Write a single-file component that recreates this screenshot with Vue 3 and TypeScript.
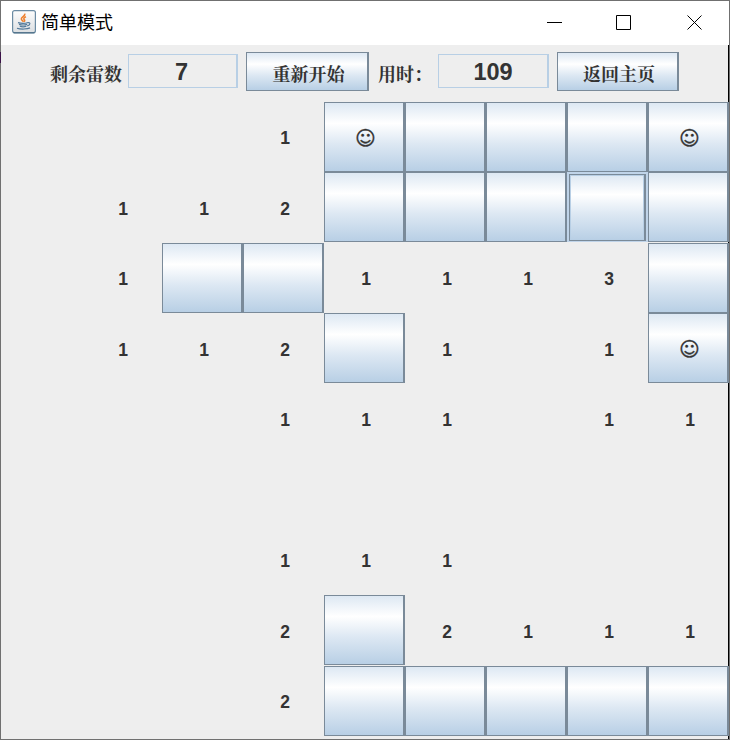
<script setup lang="ts">
type Cell = { kind: 'open' | 'covered' | 'flag' | 'focus'; text: string }

// '.' empty, digit = neighbour count, '#' covered, 'F' marked, 'O' covered with focus
const layout: string[] = [
  '...1F###F',
  '.112###O#',
  '.1##1113#',
  '.112#1.1F',
  '...111.11',
  '.........',
  '...111...',
  '...2#2111',
  '...2#####',
]

function toCell(c: string): Cell {
  if (c === '#') return { kind: 'covered', text: '' }
  if (c === 'O') return { kind: 'focus', text: '' }
  if (c === 'F') return { kind: 'flag', text: '☺' }
  return { kind: 'open', text: c === '.' ? '' : c }
}

const cells: Cell[] = layout.flatMap((row) => row.split('').map(toCell))
const minesLeft = 7
const elapsed = 109
</script>

<template>
  <div class="window">
    <header class="titlebar">
      <svg class="app-icon" width="24" height="24" viewBox="0 0 24 24">
        <defs>
          <linearGradient id="tile" x1="0" y1="0" x2="0" y2="1">
            <stop offset="0" stop-color="#fdfdfd" />
            <stop offset="1" stop-color="#dcdfe2" />
          </linearGradient>
        </defs>
        <rect x="0.6" y="0.6" width="22.8" height="22.2" rx="2" fill="url(#tile)" stroke="#6b8ba3" stroke-width="1.2" />
        <path d="M1.5 22.8H22.5" stroke="#41647e" stroke-width="1" />
        <path d="M12.6 3.6c1.4 2.2-3.4 3.4-3.3 5.4.1 1.1 1.4 1.8 2.2 2.7M14 6.8c-2.4 1-2.8 2-1.6 3.1.6.6.3 1.3-.4 1.9" fill="none" stroke="#ee8130" stroke-width="1.5" />
        <path d="M6 12.6c2.6.8 7.4.8 10-.1M7 14.4c2.4.7 5.8.7 8.2 0M7.8 16.3c2 .6 4.6.6 6.6 0M15.6 12.7c3.2-.8 3 2.4-.4 3.2M5 18.2c3.4 1.2 10.4 1.1 13-.3" fill="none" stroke="#52799a" stroke-width="1.2" />
      </svg>
      <span class="title">简单模式</span>
      <div class="controls">
        <svg width="16" height="16" viewBox="0 0 16 16"><path d="M0 7.5H15" /></svg>
        <svg width="16" height="16" viewBox="0 0 16 16"><path d="M0.5 0.5H14.5V14.5H0.5Z" /></svg>
        <svg width="16" height="16" viewBox="0 0 16 16"><path d="M0.5 0.5L14.5 14.5M14.5 0.5L0.5 14.5" /></svg>
      </div>
    </header>
    <main class="content">
      <div class="toolbar">
        <span class="label mines">剩余雷数</span>
        <output class="field">{{ minesLeft }}</output>
        <button class="metal action restart">重新开始</button>
        <span class="label time">用时：</span>
        <output class="field timer">{{ elapsed }}</output>
        <button class="metal action home">返回主页</button>
      </div>
      <div class="board">
        <div
          v-for="(cell, i) in cells"
          :key="i"
          class="cell"
          :class="[cell.kind, { metal: cell.kind !== 'open' }]"
        >
          <span v-if="cell.kind !== 'focus'">{{ cell.text }}</span>
          <span v-else class="inner metal"></span>
        </div>
      </div>
    </main>
  </div>
</template>

<style>
body {
  margin: 0;
  overflow: hidden;
}
</style>

<style scoped>
.window {
  box-sizing: border-box;
  width: 730px;
  height: 740px;
  padding: 1px;
  background:
    linear-gradient(#3b1248, #3b1248) 0 52px / 1px 11px no-repeat,
    #707070;
  color: #333;
  font-family: 'Liberation Sans', 'Noto Sans CJK SC', sans-serif;
}
.titlebar {
  display: flex;
  align-items: center;
  box-sizing: border-box;
  height: 44px;
  padding: 0 26px 0 11px;
  background: #fff;
  color: #000;
}
.app-icon {
  margin-top: -2px;
}
.title {
  margin: -4px 0 0 5px;
  font: 18px/24px 'Noto Sans CJK SC', sans-serif;
}
.controls {
  display: grid;
  grid-template-columns: 69px 71px 16px;
  margin-left: auto;
}
.controls svg {
  fill: none;
  stroke: #000;
  stroke-width: 1;
}
.content {
  box-sizing: border-box;
  height: 694px;
  background:
    linear-gradient(#000, #000) right top / 1px 100% no-repeat,
    #eee;
}
.toolbar {
  display: flex;
  align-items: flex-start;
  box-sizing: border-box;
  height: 57px;
  padding: 7px 0 0 49px;
}
.label,
.action {
  font-family: 'Noto Serif CJK SC', 'Noto Sans CJK SC', serif;
  font-size: 18px;
  font-weight: 700;
  white-space: nowrap;
}
.label {
  height: 38px;
  line-height: 42px;
}
.mines {
  width: 78px;
}
.time {
  width: 60px;
  margin-left: 9px;
}
.field {
  box-sizing: border-box;
  width: 110px;
  height: 34px;
  margin-top: 2px;
  padding-right: 2px;
  border: 1px solid #b8cfe5;
  border-right-width: 2px;
  font-size: 23.5px;
  font-weight: 700;
  line-height: 34px;
  text-align: center;
}
.timer {
  width: 111px;
  padding-right: 0;
}
.metal {
  box-sizing: border-box;
  border: 1px solid #7a8a99;
  border-right-width: 2px;
  background: linear-gradient(#dde8f3 0%, #fff 30%, #dde8f3 60%, #b8cfe5 100%);
}
.action {
  width: 123px;
  height: 39px;
  margin-left: 8px;
  padding: 2px 0 0 3px;
  border-radius: 0;
  color: #333;
}
.home {
  width: 122px;
}
.board {
  display: grid;
  grid-template-columns: repeat(9, 81px);
  grid-template-rows: 70px 71px 70px 71px 70px 71px 70px 71px 70px;
  width: 729px;
  margin-left: -1px;
}
.cell {
  display: flex;
  align-items: center;
  justify-content: center;
  box-sizing: border-box;
  height: 70px;
  font-weight: 700;
}
.open {
  height: 100%;
  padding: 3px 0 0 3px;
  font-size: 17.5px;
}
.flag {
  padding: 2px 0 0 3px;
  font-family: 'DejaVu Sans', sans-serif;
  font-size: 20px;
  font-weight: 400;
  line-height: 24px;
  -webkit-text-stroke: 0.3px #333;
}
.focus {
  padding: 2px 2px 1px;
  border: 0;
  background: #c0d4e9;
}
.inner {
  width: 77px;
  height: 67px;
  box-shadow: inset 0 0 0 1px #b8cfe5;
}
</style>
